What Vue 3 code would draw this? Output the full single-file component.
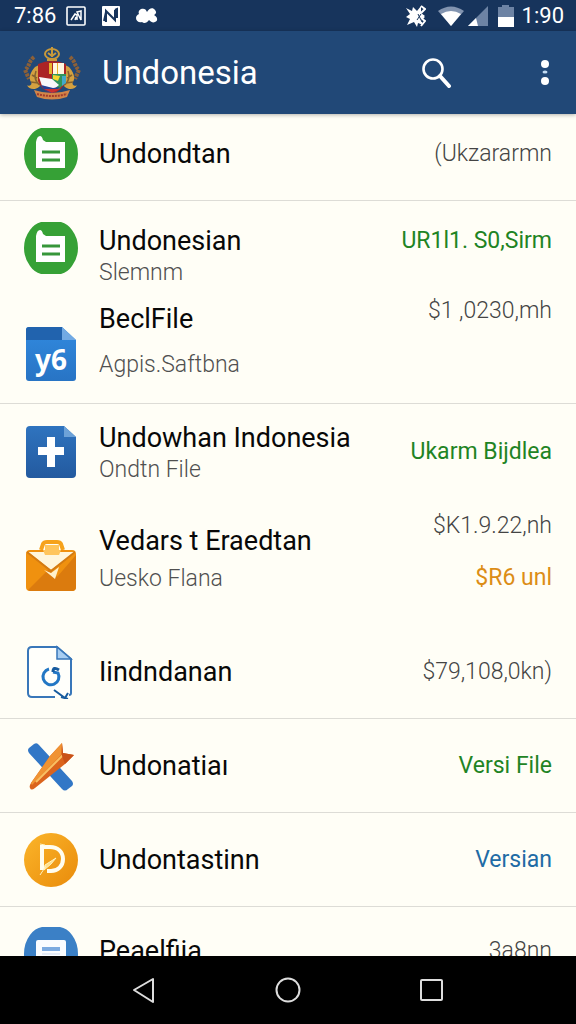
<template>
  <div class="screen">
    <div class="status-bar">
      <div class="status-bar__side">
        <span>7:86</span>
        <svg class="status-bar__box" width="20" height="20" viewBox="0 0 20 20" aria-hidden="true">
          <rect x="1" y="1" width="18" height="18" rx="1" fill="none" stroke="#fff" stroke-width="1.6" />
          <path d="M5 14l4-6 2 1v5M9 14l1-3M11 6l4-1v9l-2-4z" fill="none" stroke="#fff" stroke-width="1.5" />
        </svg>
        <svg class="status-bar__note" width="18" height="20" viewBox="0 0 18 20" aria-hidden="true">
          <rect width="18" height="20" rx="1" fill="#fff" />
          <path d="M4 16V5l9 9V4M4 6l-2 9M13 4l2-1v9" fill="none" stroke="#17345c" stroke-width="2" />
        </svg>
        <svg width="22" height="16" viewBox="0 0 22 16" aria-hidden="true">
          <path d="M5 1c3-1 5 0 6 3 2-4 6-5 8-2 2 2 1 4-1 5 4 2 4 6 1 7-2 1-4 0-6-2-2 3-5 4-7 2-3 1-6-1-6-4 0-2 1-3 3-4C2 4 3 2 5 1z" fill="#fff" />
        </svg>
      </div>
      <div class="status-bar__side status-bar__side--end">
        <svg width="20" height="22" viewBox="0 0 20 22" aria-hidden="true">
          <path d="M0 3l6 3 1-4 4 4 4-5v7l4 3-4 3 2 6-5-2-1 4-3-5-7 3 3-6-4-2 4-3z" fill="#fff" />
          <path d="M15 1l4 3-4 4M15 13l4 3-4 5M13 8l5 5" fill="none" stroke="#fff" stroke-width="2" />
          <path d="M12 9l4 8M15 9l-4 6" fill="none" stroke="#17345c" stroke-width="1" />
        </svg>
        <svg class="status-bar__wifi" width="26" height="20" viewBox="0 0 26 20" aria-hidden="true">
          <path d="M0 5Q13-4 26 5L13 20z" fill="#8294b0" />
          <path d="M3 8q10-6 20 0L13 20z" fill="#fff" />
        </svg>
        <svg width="20" height="20" viewBox="0 0 20 20" aria-hidden="true">
          <path d="M0 20L20 0v20z" fill="#6d83a4" />
          <path d="M0 20l8-8 2 8z" fill="#fff" />
        </svg>
        <svg class="status-bar__battery" width="16" height="22" viewBox="0 0 16 22" aria-hidden="true">
          <path d="M0 2h4V0h7v2h5v10H0z" fill="#6d83a4" />
          <path d="M0 12h16v10H0z" fill="#fff" />
        </svg>
        <span>1:90</span>
      </div>
    </div>

    <header class="app-bar">
      <svg class="app-bar__crest" width="60" height="54" viewBox="0 0 60 54" aria-hidden="true">
        <g fill="none" stroke="#c9993a" stroke-width="2">
          <ellipse cx="30" cy="8" rx="7" ry="5" />
          <path d="M30 1v10M25 14h10M26 7l4 3 4-3" />
        </g>
        <path d="M12 11C6 16 8 20 3 24l4 9M48 11c6 5 4 9 9 13l-4 9" fill="none" stroke="#8c6038" stroke-width="4" stroke-dasharray="3 1" />
        <path d="M13 21c-4 4-7 11-4 15 2 3-3 5-4 3 2 6 12 5 14-1l-2-19zM47 21c4 4 7 11 4 15-2 3 3 5 4 3-2 6-12 5-14-1l2-19z" fill="#d4a140" />
        <path d="M14 25c-2 5-1 11 4 14M46 25c2 5 1 11-4 14M10 29l5 3M50 29l-5 3M9 36l7 1M51 36l-7 1" fill="none" stroke="#85632f" stroke-width="1.5" />
        <path d="M16 18q14-6 28 0v17q-3 9-14 13-11-4-14-13z" fill="#ab2425" />
        <path d="M31 17h11v11H31z" fill="#fff7df" />
        <path d="M27 17h3v11h-3zM35 17h1v11h-1z" fill="#e8b32c" />
        <path d="M30 28h14v8l-7 7-7-4z" fill="#31945c" />
        <path d="M31 29l7 1-2 5-5-2z" fill="#f3d52d" />
        <path d="M40 30h4v7l-4 3z" fill="#43a9c8" />
        <path d="M17 31l13 2 7 6-5 4-12-3z" fill="#f9f7f9" />
        <path d="M19 39l12 3 7-1-8 7q-8-3-11-9z" fill="#243f94" />
        <path d="M22 43h16l-8 4z" fill="#cc3030" />
        <path d="M12 44q18 6 36 0l-3 7q-15 5-30 0z" fill="#d18548" />
        <path d="M15 48q15 4 30 0" fill="none" stroke="#a33c2c" stroke-width="2" stroke-dasharray="2 1" />
      </svg>
      <h1 class="app-bar__title">Undonesia</h1>
      <button class="app-bar__button app-bar__button--search" type="button" aria-label="Search">
        <svg width="30" height="30" viewBox="0 0 30 30" aria-hidden="true">
          <circle cx="11" cy="11" r="9.5" fill="none" stroke="#fff" stroke-width="2.6" />
          <path d="M18 18l9 10" stroke="#fff" stroke-width="4" stroke-linecap="round" />
        </svg>
      </button>
      <button class="app-bar__button" type="button" aria-label="More options">
        <svg width="10" height="28" viewBox="0 0 10 28" aria-hidden="true">
          <circle cx="5" cy="5" r="4" fill="#fff" />
          <ellipse cx="5" cy="13" rx="2.5" ry="1.5" fill="#c3dcf3" />
          <circle cx="5" cy="22" r="4" fill="#fff" />
        </svg>
      </button>
    </header>

    <main class="content">
      <ul v-for="(group, index) in groups" :key="index" class="group">
        <li v-for="item in group" :key="item.title" class="row" :class="item.layout && `row--${item.layout}`">
          <svg class="row__icon" width="54" height="54" viewBox="0 0 54 54" aria-hidden="true">
            <g v-if="item.icon === 'note'">
              <path d="M17 1h20q7 2 11 8 6 8 6 18t-6 18q-4 6-11 8H17q-7-2-11-8-6-8-6-18T6 9q4-6 11-8z" fill="#36a136" />
              <path d="M12 41V15q1-6 4-6 2 0 3 4l3 2h19v26z" fill="#fff" />
              <path d="M18 25h18M18 33h18" stroke="#36963a" stroke-width="3" />
            </g>
            <g v-else-if="item.icon === 'sheet'">
              <path d="M5 0h33l14 13v38q0 3-3 3H5q-3 0-3-3V3q0-3 3-3z" fill="url(#blueFace)" />
              <path d="M5 0h33v13H2V3q0-3 3-3z" fill="#2163ae" />
              <path d="M38 0l14 13H38z" fill="#72aae4" />
              <text class="row__icon-text" x="27" y="43" text-anchor="middle">y6</text>
            </g>
            <g v-else-if="item.icon === 'plus'">
              <path d="M6 1h34l12 11v37q0 4-4 4H6q-4 0-4-4V5q0-4 4-4z" fill="url(#deepFace)" />
              <path d="M40 1l12 11H40z" fill="#6da2d8" />
              <path d="M23 12h8v10h9v8h-9v12h-8V30h-9v-8h9z" fill="#fff" />
            </g>
            <g v-else-if="item.icon === 'mail'">
              <path d="M17 13l2-6q1-2 4-2h10q3 0 4 2l2 6" fill="none" stroke="#f6a21b" stroke-width="4" />
              <rect x="21" y="8" width="14" height="10" fill="#ffc55c" />
              <rect x="2" y="13" width="50" height="41" rx="4" fill="#f0910f" />
              <path d="M4 53l21-21 8 8 19-22v32q0 4-4 4H6z" fill="#db7b0e" />
              <path d="M4 15h48L27 33z" fill="#fff6dc" />
              <path d="M19 13h18l-2 5H21z" fill="#ffc55c" />
              <path d="M3 15l24 19 24-19" fill="none" stroke="#d47b12" stroke-width="2" />
              <path d="M20 33l7 3 8-6-4 12z" fill="#fff1cb" />
            </g>
            <g v-else-if="item.icon === 'document'">
              <path d="M31 52H8q-4 0-4-4V6q0-4 4-4h25l14 12v34q0 2-2 2" fill="#fffffb" stroke="#3977b9" stroke-width="2" />
              <path d="M33 2v12h14z" fill="#a8cef2" stroke="#3977b9" stroke-width="1.5" />
              <path d="M25 24a8 8 0 1 0 9 4l-5-1" fill="none" stroke="#2377c4" stroke-width="3" />
              <path d="M35 25q-6-4-6 2" fill="none" stroke="#175b9e" stroke-width="3" />
              <path d="M30 45l11 8 3-5M37 52l7 2" fill="none" stroke="#175b9e" stroke-width="2" />
            </g>
            <g v-else-if="item.icon === 'pencil'">
              <path d="M5 9l5-4q3-2 5 1l33 36q2 3 0 5l-4 3q-3 3-6 0L5 14q-2-3 0-5z" fill="#3277c6" />
              <path d="M38 4l1 10 11 2-9 9-30 24q-4 3-5 0-1-2 1-5l19-27z" fill="#db641d" />
              <path d="M38 4l-1 12L8 46l-1-2 19-27z" fill="#f09333" />
              <path d="M39 16L12 43" stroke="#f9c163" stroke-width="2" />
              <path d="M38 4l1 10 11 2-9 9-3-8z" fill="#c95218" />
            </g>
            <g v-else-if="item.icon === 'coin'">
              <circle cx="27" cy="27" r="27" fill="url(#coinFace)" />
              <path d="M18 13v24M16 14h10c8 0 13 5 13 12s-5 12-12 12h-4" fill="none" stroke="#fffdf0" stroke-width="4" />
              <path d="M16 11l5 1M16 42l6-9M21 32l11-7-5 6-7 6z" stroke="#fff3c2" stroke-width="1" fill="#ffe08a" />
            </g>
            <g v-else>
              <path d="M18 0h18q7 1 12 8 6 8 6 19t-6 18q-5 8-12 9H18q-7-1-12-9-6-7-6-18T6 8q5-7 12-8z" fill="#3b80c6" />
              <rect x="12" y="13" width="30" height="28" rx="2" fill="#fafcff" />
              <path d="M18 22h18" stroke="#7caae0" stroke-width="4" />
              <path d="M18 27h18M18 31h18" stroke="#ccd9ed" stroke-width="1" />
            </g>
          </svg>
          <div class="row__text">
            <h2 class="row__title">{{ item.title }}</h2>
            <p v-if="item.subtitle" class="row__subtitle">{{ item.subtitle }}</p>
          </div>
          <div class="row__values">
            <span v-for="value in item.values" :key="value.text" class="value" :class="value.tone && `value--${value.tone}`">{{ value.text }}</span>
          </div>
        </li>
      </ul>
    </main>

    <nav class="nav-bar">
      <button class="nav-bar__button" type="button" aria-label="Back">
        <svg width="24" height="28" viewBox="0 0 24 28" aria-hidden="true">
          <path d="M21 3v23L2 14z" fill="none" stroke="#ddd" stroke-width="2" stroke-linejoin="round" />
        </svg>
      </button>
      <button class="nav-bar__button" type="button" aria-label="Home">
        <svg width="28" height="28" viewBox="0 0 28 28" aria-hidden="true">
          <circle cx="14" cy="14" r="11.5" fill="none" stroke="#ddd" stroke-width="2" />
        </svg>
      </button>
      <button class="nav-bar__button" type="button" aria-label="Recent apps">
        <svg width="28" height="28" viewBox="0 0 28 28" aria-hidden="true">
          <rect x="3" y="4" width="21" height="20" rx="1" fill="none" stroke="#ddd" stroke-width="2" />
        </svg>
      </button>
    </nav>

    <svg class="gradients" width="0" height="0" aria-hidden="true">
      <defs>
        <linearGradient id="blueFace" x1="0" y1="0" x2="0" y2="1">
          <stop offset="0" stop-color="#318adf" />
          <stop offset="1" stop-color="#2874c4" />
        </linearGradient>
        <linearGradient id="deepFace" x1="0" y1="0" x2="0" y2="1">
          <stop offset="0" stop-color="#2f74bf" />
          <stop offset="1" stop-color="#235a9f" />
        </linearGradient>
        <linearGradient id="coinFace" x1="0" y1="0" x2="1" y2="1">
          <stop offset="0" stop-color="#fbb52a" />
          <stop offset="1" stop-color="#e98b0b" />
        </linearGradient>
      </defs>
    </svg>
  </div>
</template>

<script setup>
const groups = [
  [
    { icon: 'note', layout: 'first', title: 'Undondtan', values: [{ text: '(Ukzararmn' }] }
  ],
  [
    {
      icon: 'note',
      layout: 'lead',
      title: 'Undonesian',
      subtitle: 'Slemnm',
      values: [{ text: 'UR1l1. S0,Sirm', tone: 'green' }]
    },
    {
      icon: 'sheet',
      layout: 'file',
      title: 'BeclFile',
      subtitle: 'Agpis.Saftbna',
      values: [{ text: '$1 ,0230,mh' }]
    }
  ],
  [
    {
      icon: 'plus',
      layout: 'double',
      title: 'Undowhan Indonesia',
      subtitle: 'Ondtn File',
      values: [{ text: 'Ukarm Bijdlea', tone: 'green' }]
    },
    {
      icon: 'mail',
      layout: 'tall',
      title: 'Vedars t Eraedtan',
      subtitle: 'Uesko Flana',
      values: [{ text: '$K1.9.22,nh' }, { text: '$R6 unl', tone: 'orange' }]
    },
    { icon: 'document', layout: 'last', title: 'Iindndanan', values: [{ text: '$79,108,0kn)' }] }
  ],
  [
    { icon: 'pencil', title: 'Undonatiaı', values: [{ text: 'Versi File', tone: 'green' }] }
  ],
  [
    { icon: 'coin', title: 'Undontastinn', values: [{ text: 'Versian', tone: 'blue' }] }
  ],
  [
    { icon: 'card', layout: 'cut', title: 'Peaelfija', values: [{ text: '3a8nn' }] }
  ]
]
</script>

<style>
body {
  margin: 0;
}
</style>

<style scoped>
.screen {
  display: flex;
  flex-direction: column;
  height: 100vh;
  overflow: hidden;
  background: #fffef6;
  color: #080808;
  font-family: Roboto, "Liberation Sans", sans-serif;
}

.screen svg {
  display: block;
  flex: none;
}

.status-bar {
  display: flex;
  flex: none;
  align-items: center;
  justify-content: space-between;
  height: 31px;
  padding: 0 12px 0 14px;
  background: #17345c;
  color: #fff;
  font-size: 22px;
  line-height: 28px;
}

.status-bar__side {
  display: flex;
  align-items: center;
}

.status-bar__box {
  margin: 0 16px 0 10px;
}

.status-bar__note {
  margin-right: 16px;
}

.status-bar__wifi {
  margin: 0 4px 0 12px;
}

.status-bar__battery {
  margin: 0 8px 0 10px;
}

.app-bar {
  position: relative;
  z-index: 1;
  display: flex;
  flex: none;
  align-items: center;
  height: 83px;
  padding: 0 16px 0 22px;
  box-sizing: border-box;
  background: #214877;
  box-shadow: 0 1px 4px rgba(0, 0, 0, 0.3);
  color: #fff;
}

.app-bar__title {
  flex: 1;
  margin: 0 0 0 20px;
  font-size: 33px;
  font-weight: 400;
  line-height: 40px;
}

.app-bar__button {
  display: flex;
  align-items: center;
  justify-content: center;
  width: 30px;
  height: 48px;
  padding: 0;
  border: 0;
  background: none;
}

.app-bar__button--search {
  margin-right: 78px;
}

.content {
  flex: 1;
  min-height: 0;
  overflow: hidden;
}

.group {
  margin: 0;
  padding: 0;
  border-bottom: 1px solid #dddcd6;
  list-style: none;
}

.row {
  display: flex;
  align-items: center;
  gap: 21px;
  min-height: 93px;
  padding: 0 24px;
  box-sizing: border-box;
}

.row__text {
  flex: 1;
  min-width: 0;
}

.row__title {
  margin: 0;
  font-size: 27px;
  font-weight: 400;
  line-height: 32px;
}

.row__subtitle {
  margin: 2px 0 0;
  color: #505050;
  font-size: 23px;
  font-weight: 300;
  line-height: 28px;
}

.row__values {
  display: flex;
  flex-direction: column;
  align-items: flex-end;
}

.row__icon-text {
  fill: #fff;
  font-family: "Noto Sans", sans-serif;
  font-size: 28px;
  font-weight: 700;
}

.row--first {
  min-height: 86px;
  padding-bottom: 6px;
}

.row--lead {
  align-items: flex-start;
  min-height: 90px;
  padding-top: 20px;
}

.row--lead .row__text,
.row--lead .row__values {
  margin-top: 4px;
}

.row--file {
  align-items: flex-start;
  min-height: 112px;
  padding-top: 4px;
}

.row--file .row__icon {
  margin-top: 32px;
}

.row--file .row__text {
  margin-top: 8px;
}

.row--file .row__subtitle {
  margin-top: 16px;
}

.row--double {
  min-height: 96px;
}

.row--double .row__text {
  margin-top: 2px;
}

.row--tall {
  min-height: 112px;
}

.row--tall .row__icon {
  margin-top: 16px;
}

.row--tall .row__text {
  margin-top: 6px;
}

.row--tall .row__subtitle {
  margin-top: 8px;
}

.row--tall .row__values {
  gap: 20px;
  margin-bottom: 8px;
}

.row--last {
  min-height: 106px;
  padding-top: 14px;
}

.row--cut .row__text,
.row--cut .row__values {
  margin-bottom: 6px;
}

.value {
  color: #444;
  font-size: 23px;
  font-weight: 300;
  line-height: 32px;
  white-space: nowrap;
}

.value--green {
  color: #1f8424;
  font-weight: 400;
}

.value--orange {
  color: #dc8d16;
  font-weight: 400;
}

.value--blue {
  color: #216ba5;
  font-weight: 400;
}

.nav-bar {
  display: flex;
  flex: none;
  justify-content: center;
  height: 68px;
  background: #000;
}

.nav-bar__button {
  display: flex;
  align-items: center;
  justify-content: center;
  width: 25%;
  padding: 0;
  border: 0;
  background: none;
}

.gradients {
  position: absolute;
}
</style>
